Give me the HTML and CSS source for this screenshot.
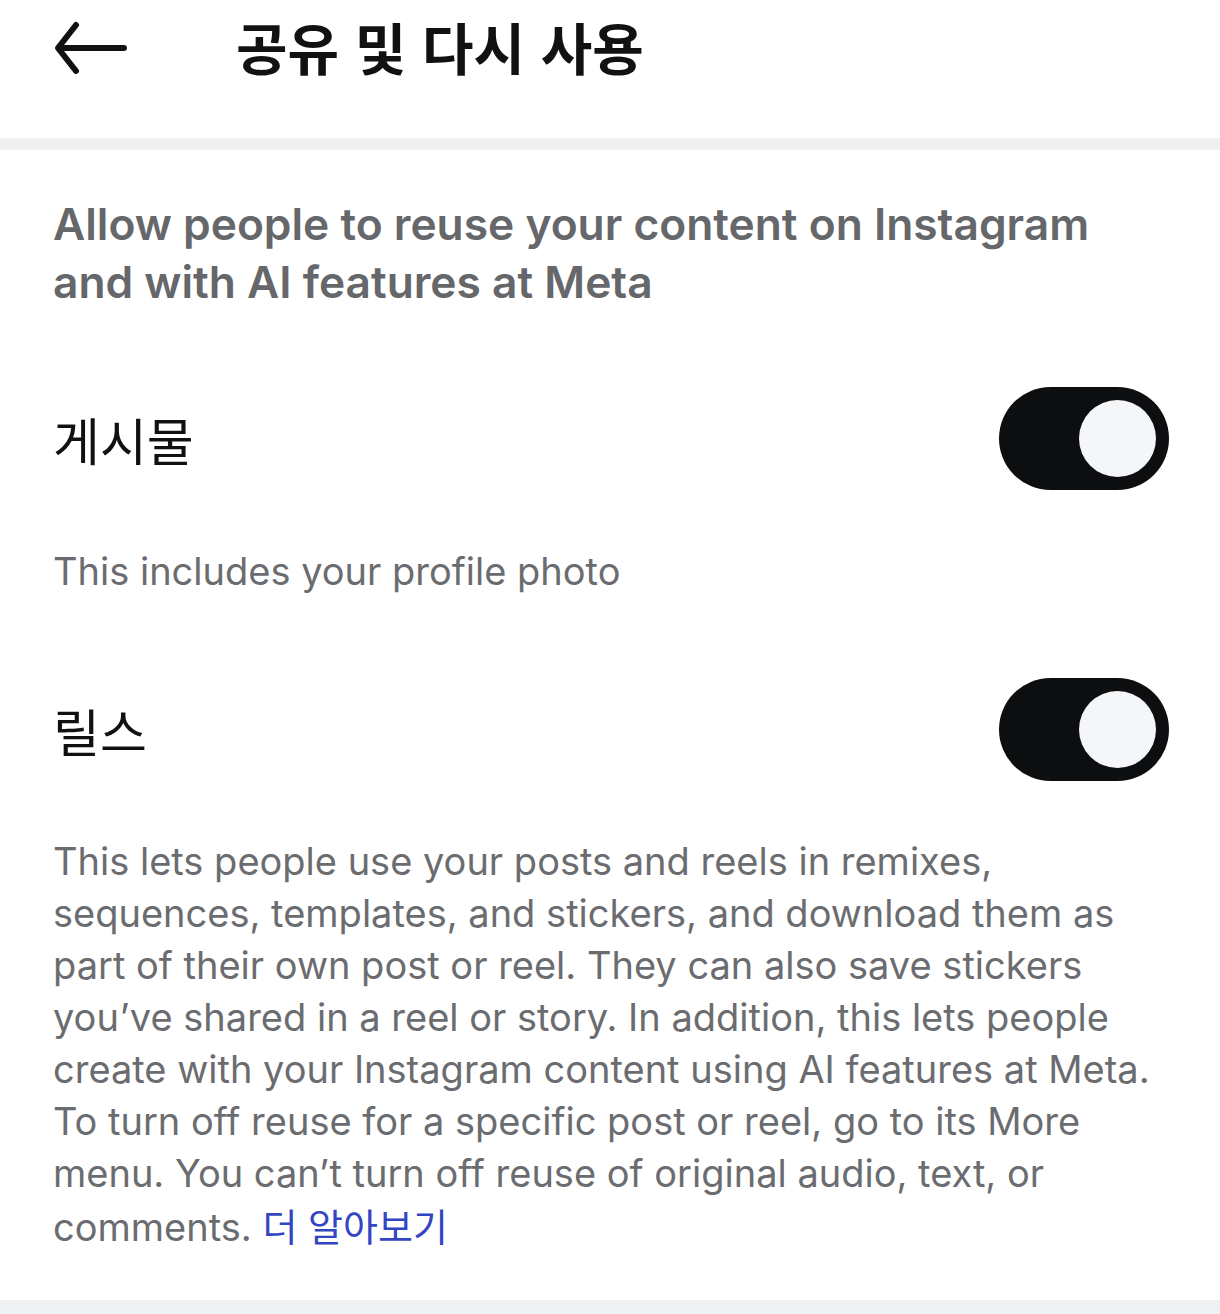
FILE: index.html
```html
<!DOCTYPE html>
<html lang="ko">
<head>
<meta charset="utf-8">
<link rel="stylesheet" href="styles.css">
</head>
<body>
<header class="topbar">
  <svg class="back" width="76" height="56" viewBox="0 0 76 56"><path d="M71 28H6M23 5L5 28L23 51" fill="none" stroke="#111" stroke-width="6" stroke-linecap="round" stroke-linejoin="round"/></svg>
  <h1 class="title">공유 및 다시 사용</h1>
</header>
<div class="sep"></div>
<main class="content">
  <h2 class="heading">Allow people to reuse your content on Instagram<br>and with AI features at Meta</h2>
  <div class="row">
    <span class="label">게시물</span>
    <span class="toggle"><span class="knob"></span></span>
  </div>
  <p class="desc short">This includes your profile photo</p>
  <div class="row second">
    <span class="label">릴스</span>
    <span class="toggle"><span class="knob"></span></span>
  </div>
  <p class="desc">This lets people use your posts and reels in remixes,<br>sequences, templates, and stickers, and download them as<br>part of their own post or reel. They can also save stickers<br>you’ve shared in a reel or story. In addition, this lets people<br>create with your Instagram content using AI features at Meta.<br>To turn off reuse for a specific post or reel, go to its More<br>menu. You can’t turn off reuse of original audio, text, or<br>comments. <a class="link">더 알아보기</a></p>
</main>
<div class="sep bottom"></div>
</body>
</html>
```
FILE: styles.css
```css
html, body { margin: 0; padding: 0; background: #fff; }
body { width: 1220px; height: 1314px; overflow: hidden; font-family: Inter, "Noto Sans CJK KR", sans-serif; position: relative; }
.topbar { height: 138px; display: flex; align-items: flex-start; padding-left: 53px; box-sizing: border-box; }
.back { display: block; margin-top: 20px; }
.title { margin: 4px 0 0 107px; font-family: "Noto Sans CJK KR", sans-serif; font-weight: 700; font-size: 56px; line-height: 84px; color: #111; }
.sep { height: 12px; background: #eff0f2; }
.content { padding: 0 53px; }
.heading { margin: 45px 0 0; font-weight: 600; font-size: 44.3px; line-height: 58px; color: #65676b; white-space: nowrap; }
.row { display: flex; align-items: center; justify-content: space-between; height: 103px; margin-top: 76px; }
.row.second { margin-top: 81px; }
.label { font-family: "Noto Sans CJK KR", sans-serif; font-size: 51px; color: #111; }
.toggle { width: 170px; height: 103px; border-radius: 52px; background: #0d0e10; position: relative; margin-right: -2px; }
.knob { position: absolute; right: 13px; top: 13px; width: 77px; height: 77px; border-radius: 50%; background: #f5f6f7; }
.desc { margin: 54px 0 0; font-size: 38px; line-height: 52px; color: #6b6c70; white-space: nowrap; }
.desc.short { margin-top: 55px; }
.link { color: #3346c1; font-family: "Noto Sans CJK KR", sans-serif; }
.sep.bottom { position: absolute; top: 1300px; left: 0; width: 1220px; height: 14px; }
```
